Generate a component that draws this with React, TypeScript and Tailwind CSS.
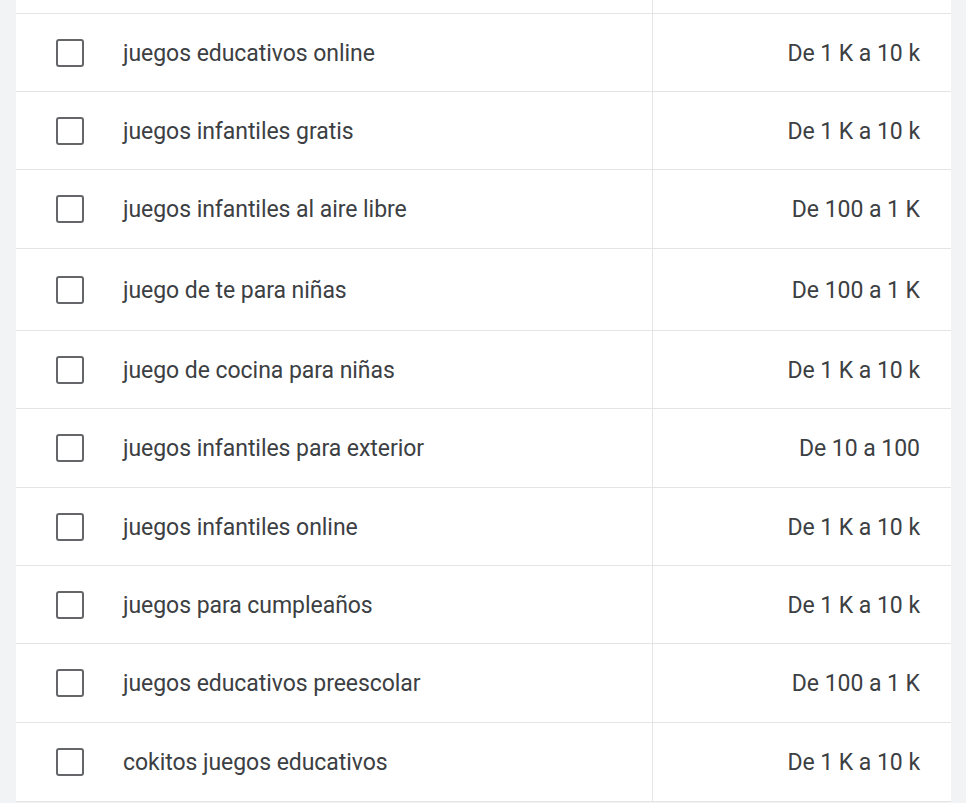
type Row = { kw: string; vol: string; h: string };

const rows: Row[] = [
  { kw: 'juegos educativos online', vol: 'De 1 K a 10 k', h: 'h-[78px]' },
  { kw: 'juegos infantiles gratis', vol: 'De 1 K a 10 k', h: 'h-[78px]' },
  { kw: 'juegos infantiles al aire libre', vol: 'De 100 a 1 K', h: 'h-[79px]' },
  { kw: 'juego de te para niñas', vol: 'De 100 a 1 K', h: 'h-[82px]' },
  { kw: 'juego de cocina para niñas', vol: 'De 1 K a 10 k', h: 'h-[78px]' },
  { kw: 'juegos infantiles para exterior', vol: 'De 10 a 100', h: 'h-[79px]' },
  { kw: 'juegos infantiles online', vol: 'De 1 K a 10 k', h: 'h-[78px]' },
  { kw: 'juegos para cumpleaños', vol: 'De 1 K a 10 k', h: 'h-[78px]' },
  { kw: 'juegos educativos preescolar', vol: 'De 100 a 1 K', h: 'h-[79px]' },
  { kw: 'cokitos juegos educativos', vol: 'De 1 K a 10 k', h: 'h-[79px]' },
];

const KeywordRow = ({ row }: { row: Row }) => (
  <div className={`flex border-b border-[#e3e4e6] ${row.h}`}>
    <div className="flex w-[637px] items-center border-r border-[#e3e4e6]">
      <div className="ml-[40px] h-[28px] w-[28px] rounded-[3px] border-[2.5px] border-[#646669]" />
      <span className="ml-[39px] mt-[3px] text-[23px] tracking-[-0.05px] text-[#3c4043]">{row.kw}</span>
    </div>
    <div className="flex flex-1 items-center justify-end pr-[31px]">
      <span className="mt-[3px] text-[23px] tracking-[-0.05px] text-[#3c4043]">{row.vol}</span>
    </div>
  </div>
);

export default function App() {
  return (
    <div className="min-h-[803px] w-[966px] bg-[#f1f3f4] font-['Roboto',sans-serif]">
      <div className="ml-[16px] w-[935px] bg-white">
        <div className="flex h-[14px] border-b border-[#e3e4e6]">
          <div className="w-[637px] border-r border-[#e3e4e6]" />
        </div>
        {rows.map((r) => (
          <KeywordRow key={r.kw} row={r} />
        ))}
      </div>
    </div>
  );
}
